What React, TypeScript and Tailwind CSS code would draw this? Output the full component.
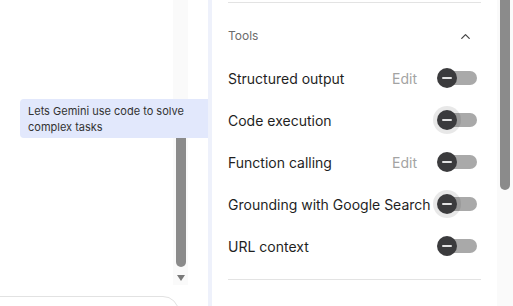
import { ChevronUp } from "lucide-react";

interface Tool {
  label: string;
  edit?: boolean;
  focused?: boolean;
}

const tools: Tool[] = [
  { label: "Structured output", edit: true },
  { label: "Code execution", focused: true },
  { label: "Function calling", edit: true },
  { label: "Grounding with Google Search", focused: true },
  { label: "URL context" },
];

const Toggle = ({ focused }: { focused?: boolean }) => (
  <div className="relative w-[40px] h-[20px] shrink-0">
    <div className="absolute left-[4px] right-0 top-[3px] h-[14px] rounded-full bg-[#a9a9a9]" />
    <div
      className={`absolute left-0 top-0 w-[20px] h-[20px] rounded-full bg-[#3b3b3d] flex items-center justify-center ${
        focused ? "shadow-[0_0_0_4px_rgba(0,0,0,0.09)]" : ""
      }`}
    >
      <div className="w-[10px] h-[2px] rounded-full bg-[#e3e3e3]" />
    </div>
  </div>
);

export default function App() {
  return (
    <div
      className="w-[513px] h-[306px] bg-white flex overflow-hidden"
      style={{ fontFamily: "Inter, 'Noto Sans', sans-serif" }}
    >
      {/* Left panel */}
      <div className="relative w-[208px] h-full flex flex-col overflow-hidden">
        <div className="h-[296px] shrink-0 flex">
          <div className="flex-1" />
          <div className="w-[15px] h-[285px] bg-[#fafafa] flex flex-col items-center">
            <div className="mt-[118px] w-[10px] h-[149px] rounded-b-full bg-[#8b8b8b]" />
            <div className="mt-[8px] w-0 h-0 border-l-[4px] border-r-[4px] border-t-[6px] border-l-transparent border-r-transparent border-t-[#7a7a7a]" />
          </div>
          <div className="w-[20px]" />
        </div>
        <div className="-ml-[20px] w-[199px] h-[40px] shrink-0 rounded-[16px] border border-[#e2e2e2]" />

        {/* Tooltip */}
        <div className="absolute left-[20px] top-[99px] w-[199px] h-[39px] rounded-[4px] bg-[#e2e8fc] px-[8px] py-[4px] text-[11px] leading-[16px] text-[#333333] z-10">
          Lets Gemini use code to solve
          <br />
          complex tasks
        </div>
      </div>

      <div className="w-[4px] h-full bg-[#eef1fb]" />

      {/* Right panel */}
      <div className="flex-1 flex h-full">
        <div className="flex-1 px-[16px]">
          <div className="mt-[2px] border-t border-[#e3e3e3]" />
          <div className="mt-[12px] h-[42px] flex items-center justify-between">
            <span className="text-[12px] text-[#6b6b6b]">Tools</span>
            <ChevronUp className="w-[15px] h-[15px] mr-[8px] text-[#444]" strokeWidth={2} />
          </div>
          {tools.map((tool) => (
            <div key={tool.label} className="h-[42px] flex items-center">
              <span className="flex-1 text-[14px] text-[#1f1f1f] whitespace-nowrap">
                {tool.label}
              </span>
              {tool.edit && (
                <span className="text-[14px] text-[#a3a3a3] mr-[20px]">Edit</span>
              )}
              <Toggle focused={tool.focused} />
              <div className="w-[4px]" />
            </div>
          ))}
          <div className="mt-[12px] border-t border-[#e3e3e3]" />
        </div>
        <div className="w-[16px] h-full bg-[#fafafa] flex justify-center">
          <div className="w-[10px] h-[190px] rounded-b-full bg-[#8b8b8b]" />
        </div>
      </div>
    </div>
  );
}
